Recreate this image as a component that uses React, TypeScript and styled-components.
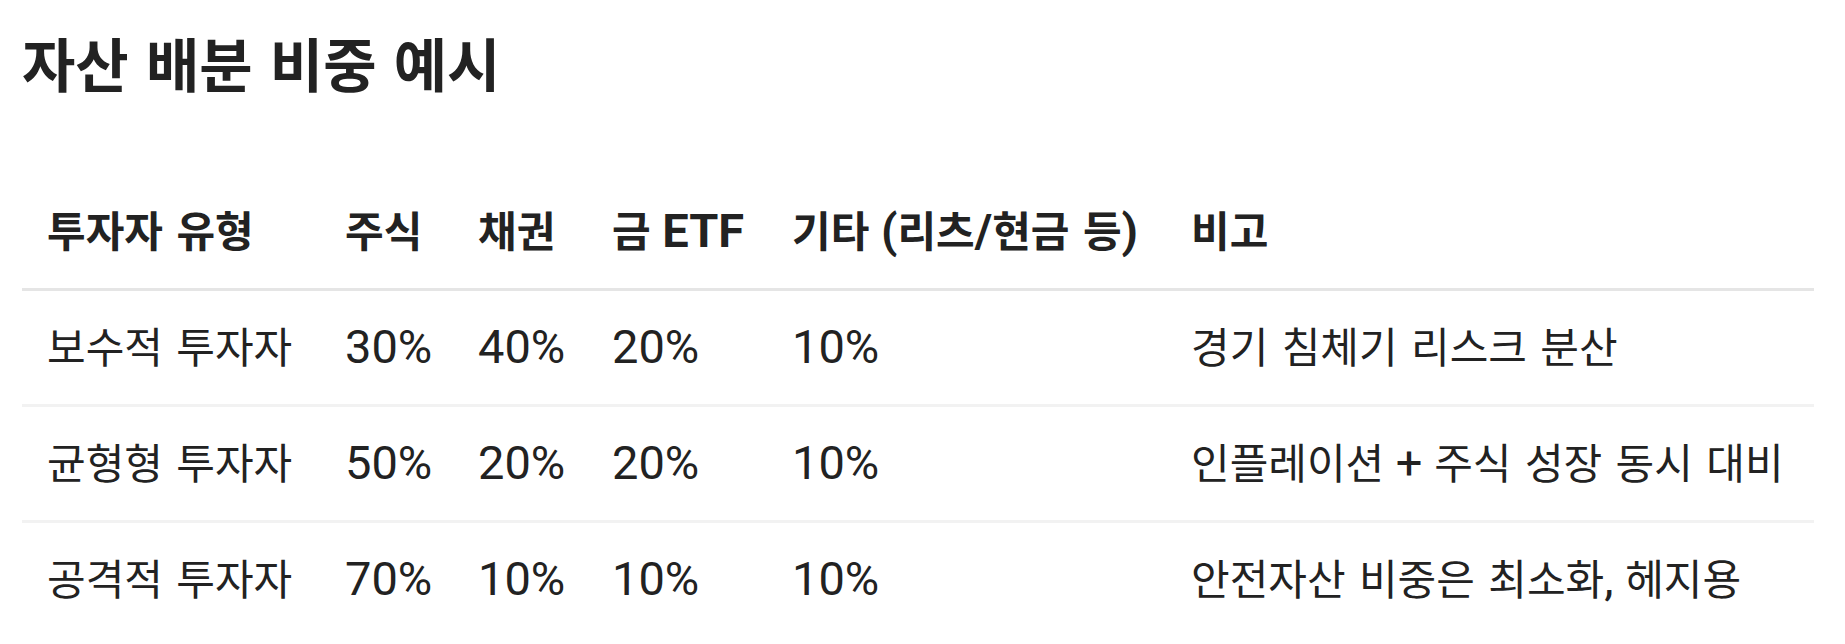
import React from 'react';
import styled, { createGlobalStyle } from 'styled-components';

type Row = {
  investor: string;
  stock: string;
  bond: string;
  gold: string;
  etc: string;
  note: string;
};

const columns = [
  { label: '투자자 유형', width: 298 },
  { label: '주식', width: 133 },
  { label: '채권', width: 134 },
  { label: '금 ETF', width: 180 },
  { label: '기타 (리츠/현금 등)', width: 399 },
  { label: '비고', width: 648 },
];

const rows: Row[] = [
  { investor: '보수적 투자자', stock: '30%', bond: '40%', gold: '20%', etc: '10%', note: '경기 침체기 리스크 분산' },
  { investor: '균형형 투자자', stock: '50%', bond: '20%', gold: '20%', etc: '10%', note: '인플레이션 + 주식 성장 동시 대비' },
  { investor: '공격적 투자자', stock: '70%', bond: '10%', gold: '10%', etc: '10%', note: '안전자산 비중은 최소화, 헤지용' },
];

// hangul runs (with the spaces between them) get the CJK font, the rest stays Roboto
const HANGUL = /([\u3131-\u318E\uAC00-\uD7A3]+(?:\s+[\u3131-\u318E\uAC00-\uD7A3]+)*)/;

function Mixed({ text }: { text: string }) {
  return (
    <>
      {text.split(HANGUL).map((part, i) => (i % 2 ? <Ko key={i}>{part}</Ko> : part))}
    </>
  );
}

export default function App() {
  return (
    <Page>
      <GlobalStyle />
      <Title>자산 배분 비중 예시</Title>

      <Table>
        <colgroup>
          {columns.map((c) => (
            <Col key={c.label} $w={c.width} />
          ))}
        </colgroup>
        <thead>
          <HeadRow>
            {columns.map((c) => (
              <Th key={c.label}>
                <Mixed text={c.label} />
              </Th>
            ))}
          </HeadRow>
        </thead>
        <tbody>
          {rows.map((r) => (
            <BodyRow key={r.investor}>
              <Td>
                <Mixed text={r.investor} />
              </Td>
              <Td>{r.stock}</Td>
              <Td>{r.bond}</Td>
              <Td>{r.gold}</Td>
              <Td>{r.etc}</Td>
              <Td>
                <Mixed text={r.note} />
              </Td>
            </BodyRow>
          ))}
        </tbody>
      </Table>
    </Page>
  );
}

const GlobalStyle = createGlobalStyle`
  html, body {
    margin: 0;
    background: #fff;
  }

  body {
    color: #222;
    font-family: Roboto, "Noto Sans CJK KR", sans-serif;
  }
`;

const Page = styled.div`
  padding: 30px 22px 0;
`;

const Title = styled.h2`
  margin: 0 0 80px;
  height: 65px;
  font-family: "Noto Sans CJK KR", sans-serif;
  font-size: 58px;
  line-height: 65px;
  font-weight: 700;
  color: #222;
  word-spacing: 4px;
`;

const Table = styled.table`
  width: 1792px;
  table-layout: fixed;
  border-collapse: collapse;
  font-size: 47px;
  line-height: 1.2;
`;

const Col = styled.col<{ $w: number }>`
  width: ${({ $w }) => `${$w}px`};
`;

const HeadRow = styled.tr`
  border-bottom: 3px solid #e5e5e5;
`;

const BodyRow = styled.tr`
  & + & {
    border-top: 3px solid #f2f2f2;
  }
`;

const Th = styled.th`
  height: 113px;
  padding: 0 25px;
  text-align: left;
  vertical-align: middle;
  font-weight: 700;
  white-space: nowrap;
`;

const Td = styled.td`
  height: 113px;
  padding: 0 25px;
  text-align: left;
  vertical-align: middle;
  font-weight: 400;
  white-space: nowrap;
`;

const Ko = styled.span`
  font-family: "Noto Sans CJK KR", sans-serif;
  font-size: 42px;
  word-spacing: 4px;
`;
